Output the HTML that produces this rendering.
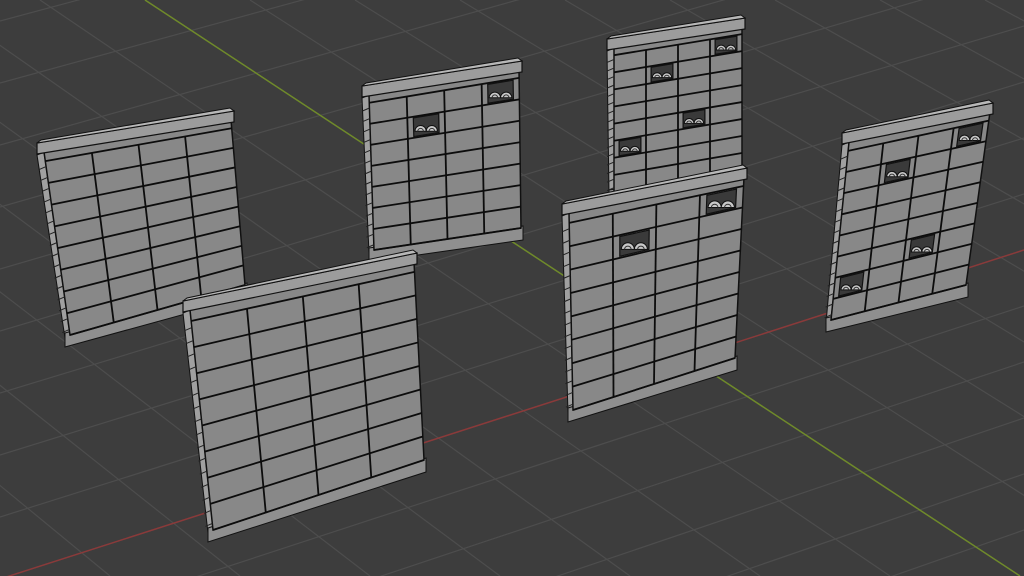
<!DOCTYPE html>
<html><head><meta charset="utf-8"><style>
html,body{margin:0;padding:0;background:#3d3d3d;width:1024px;height:576px;overflow:hidden}
svg{display:block}
</style></head><body>
<svg id="s" width="1024" height="576" viewBox="0 0 1024 576" xmlns="http://www.w3.org/2000/svg">
<rect width="1024" height="576" fill="#3d3d3d"/>
<g id="grid" stroke="#4d4d4d" stroke-width="1.2"></g>
<line x1="0" y1="579" x2="1024" y2="250" stroke="#8a3a3a" stroke-width="1.5"/>
<line x1="145" y1="0" x2="1020" y2="576" stroke="#6f8a2a" stroke-width="1.5"/>
<g id="walls"></g>
</svg>
<script>
var NS="http://www.w3.org/2000/svg";
function el(p,t,a){var e=document.createElementNS(NS,t);for(var k in a)e.setAttribute(k,a[k]);p.appendChild(e);return e;}
var g=document.getElementById('grid');
for(var i=-12;i<14;i++){var y0=579+i*62;el(g,'line',{x1:0,y1:y0,x2:1024,y2:y0-329-i*6});}
for(var j=-14;j<10;j++){var x0=145+j*105;el(g,'line',{x1:x0,y1:0,x2:x0+875+j*25,y2:576});}
var W=document.getElementById('walls');
function lerp(a,b,t){return [a[0]+(b[0]-a[0])*t,a[1]+(b[1]-a[1])*t];}
function bil(q,u,v){var t=lerp(q[0],q[1],u),b=lerp(q[3],q[2],u);return lerp(t,b,v);}
function pts(a){return a.map(function(p){return p[0].toFixed(1)+','+p[1].toFixed(1)}).join(' ');}
function wall(q,rows,cols,orn){
  var TL=q[0],TR=q[1],BR=q[2],BL=q[3];
  var sw=7;
  el(W,'polygon',{points:pts([[TL[0]-sw,TL[1]+3],TL,BL,[BL[0]-sw+2,BL[1]+3]]),fill:'#a0a0a0',stroke:'#111','stroke-width':1});
  var bh=12;
  el(W,'polygon',{points:pts([[BL[0]-sw+2,BL[1]-2],[BR[0]+2,BR[1]-2],[BR[0]+2,BR[1]+bh],[BL[0]-sw+2,BL[1]+bh]]),fill:'#8f8f8f',stroke:'#111','stroke-width':1});
  el(W,'polygon',{points:pts(q),fill:'#888888',stroke:'#111','stroke-width':1.5});
  var vs=0.05;
  for(var r=0;r<=rows;r++){var v=vs+(1-vs)*r/rows;el(W,'line',{x1:bil(q,0,v)[0],y1:bil(q,0,v)[1],x2:bil(q,1,v)[0],y2:bil(q,1,v)[1],stroke:'#0c0c0c','stroke-width':1.8});}
  for(var c=1;c<cols;c++){var u=c/cols;var a=bil(q,u,vs),b=bil(q,u,1);el(W,'line',{x1:a[0],y1:a[1],x2:b[0],y2:b[1],stroke:'#0c0c0c','stroke-width':1.8});}
  for(var r2=0;r2<rows*2;r2++){var v1=vs+(1-vs)*(r2+0.5)/(rows*2);var p=bil(q,0,v1);el(W,'line',{x1:p[0]-sw,y1:p[1]+3,x2:p[0],y2:p[1],stroke:'#222','stroke-width':1});}
  (orn||[]).forEach(function(o){var c=o[0],r=o[1];
    var v0=vs+(1-vs)*r/rows,v1=vs+(1-vs)*(r+1)/rows,u0=c/cols+0.04,u1=(c+1)/cols-0.04;
    var pp=[bil(q,u0,v0+0.008),bil(q,u1,v0+0.008),bil(q,u1,v1-0.008),bil(q,u0,v1-0.008)];
    el(W,'polygon',{points:pts(pp),fill:'#3a3a3a',stroke:'#111','stroke-width':1.2});
    var cx=(pp[0][0]+pp[2][0])/2,cy=(pp[0][1]+pp[2][1])/2,w=(pp[1][0]-pp[0][0]),h=(pp[3][1]-pp[0][1]);
    var rr=w/4.5;
    var by=cy+h*0.32;
    el(W,'path',{d:'M'+(cx-rr*2)+','+by+' a'+rr+','+rr+' 0 0 1 '+(rr*2)+',0 a'+rr+','+rr+' 0 0 1 '+(rr*2)+',0 Z',fill:'#c8c8c8',stroke:'#111','stroke-width':1});
    el(W,'path',{d:'M'+(cx-rr*1.5)+','+by+' a'+(rr*0.5)+','+(rr*0.5)+' 0 0 1 '+rr+',0 M'+(cx+rr*0.5)+','+by+' a'+(rr*0.5)+','+(rr*0.5)+' 0 0 1 '+rr+',0',fill:'none',stroke:'#333','stroke-width':1});
  });
  var ch=9;
  el(W,'polygon',{points:pts([[TL[0]-sw,TL[1]-ch],[TR[0]+3,TR[1]-ch],[TR[0]+3,TR[1]+2],[TL[0]-sw,TL[1]+2]]),fill:'#9c9c9c',stroke:'#111','stroke-width':1.2});
  el(W,'polygon',{points:pts([[TL[0]-sw,TL[1]-ch],[TR[0]+3,TR[1]-ch],[TR[0]-1,TR[1]-ch-3],[TL[0]-3,TL[1]-ch-3]]),fill:'#b8b8b8',stroke:'#111','stroke-width':1});
}
wall([[614,48],[742,27],[742,170],[614,192]],8,4,[[1,1],[3,0],[0,5],[2,4]]);
wall([[369,95],[519,70],[521,228],[374,250]],7,4,[[1,1],[3,0]]);
wall([[44,152],[231,120],[245,285],[70,335]],8,4,[]);
wall([[849,142],[990,112],[966,285],[831,320]],8,4,[[1,1],[3,0],[0,6],[2,5]]);
wall([[569,213],[744,177],[735,358],[573,410]],8,4,[[1,1],[3,0]]);
wall([[190,310],[414,262],[424,460],[213,530]],8,4,[]);
</script>
</body></html>
